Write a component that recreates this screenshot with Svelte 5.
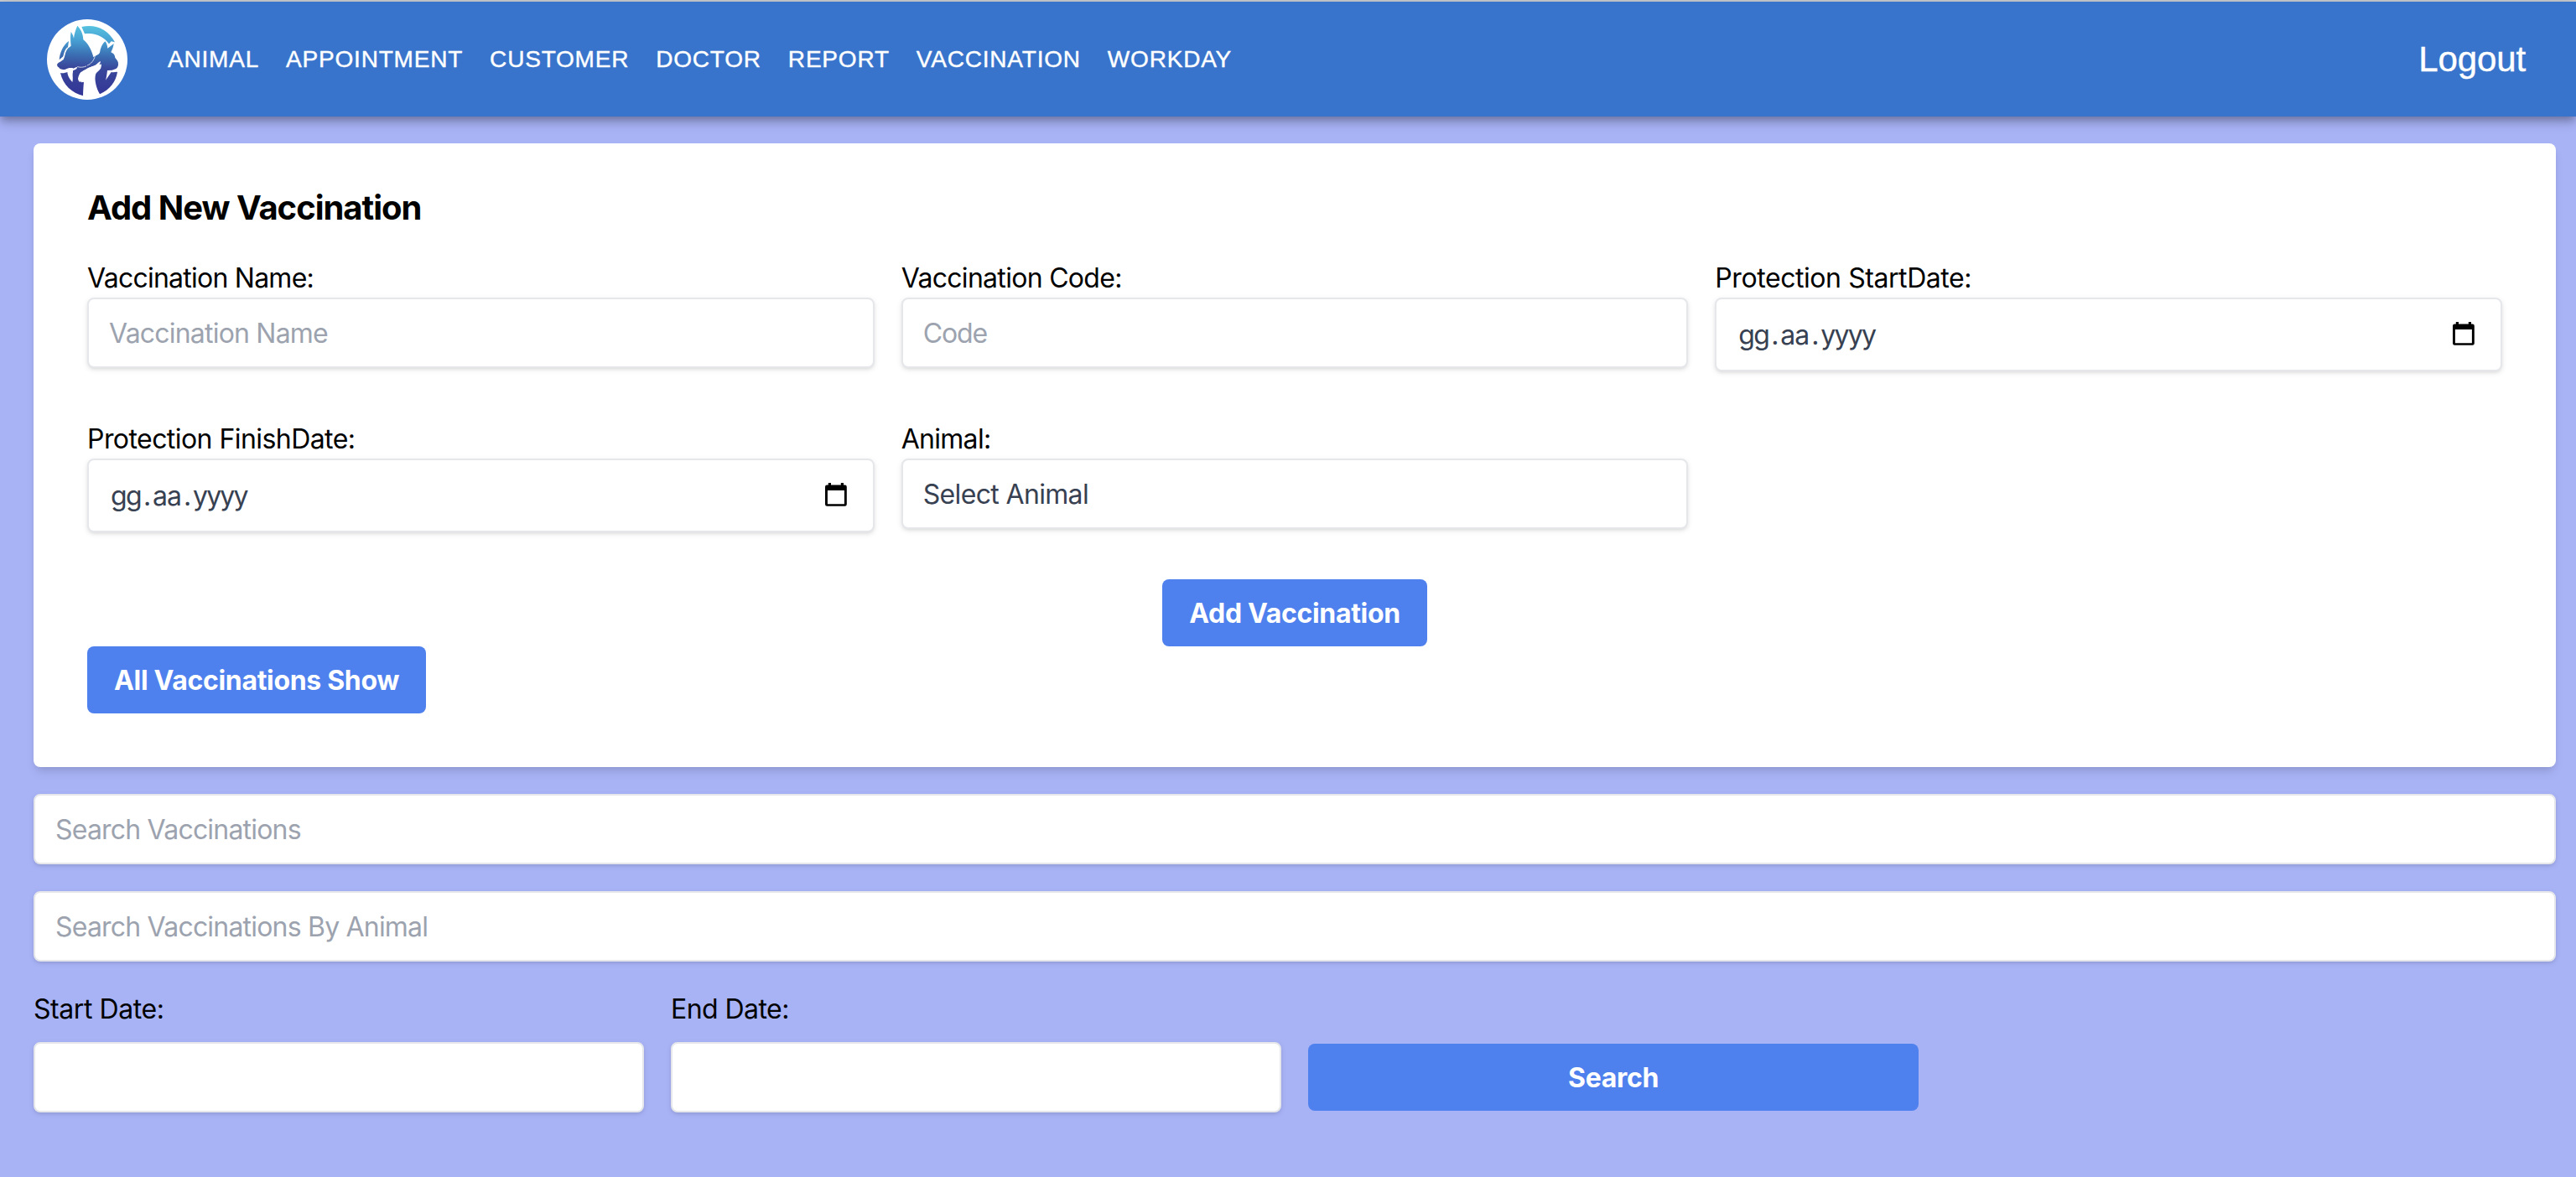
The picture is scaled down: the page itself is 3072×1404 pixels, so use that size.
<script>
  const links = ['ANIMAL', 'APPOINTMENT', 'CUSTOMER', 'DOCTOR', 'REPORT', 'VACCINATION', 'WORKDAY'];
  const placeholderDate = { day: 'gg', month: 'aa', year: 'yyyy' };
</script>

{#snippet dateField()}
  <div class="control date">
    <span class="date-text">
      <span class="day">{placeholderDate.day}</span><span class="dot">.</span><span class="month">{placeholderDate.month}</span><span class="dot">.</span><span class="year">{placeholderDate.year}</span>
    </span>
    <svg class="calendar" viewBox="0 0 26 28" aria-hidden="true">
      <rect x="3.8" y="0" width="3.2" height="5" />
      <rect x="18.8" y="0" width="3.2" height="5" />
      <path fill-rule="evenodd" d="M2.2 2.6H23.6A2.2 2.2 0 0 1 25.8 4.8V25.6A2.2 2.2 0 0 1 23.6 27.8H2.2A2.2 2.2 0 0 1 0 25.6V4.8A2.2 2.2 0 0 1 2.2 2.6ZM2.9 9V25.2H22.9V9Z" />
    </svg>
  </div>
{/snippet}

<div class="page">
  <header class="appbar">
    <svg class="logo" viewBox="18 24 288 288" role="img" aria-label="Veterinary logo">
      <defs>
        <linearGradient id="coat" gradientUnits="userSpaceOnUse" x1="170" y1="46" x2="160" y2="298">
          <stop offset="0" stop-color="#57c3e0" />
          <stop offset="0.22" stop-color="#479fd2" />
          <stop offset="0.42" stop-color="#3b6fb3" />
          <stop offset="0.6" stop-color="#39489b" />
          <stop offset="1" stop-color="#333596" />
        </linearGradient>
      </defs>
      <circle cx="162" cy="168" r="144" fill="#fff" />
      <g fill="url(#coat)">
        <path d="M142 51C190 39 238 60 261 106L248 103L240 112C222 86 190 70 153 76Z" />
        <path d="M62 169C64 144 75 117 96 102L93 124C82 130 80 143 76 157Z" />
        <path d="M127 47C137 58 147 72 148 97C164 110 178 132 184 160L178 181C172 191 160 194 146 194C136 200 124 203 112 199C102 197 93 198 84 203C74 205 64 203 60 196C52 190 53 183 60 179C66 176 69 174 77 168C83 158 82 146 88 136C92 127 98 124 104 119C102 101 101 85 104 69C109 75 112 84 114 92C116 75 121 59 127 47Z" />
        <path d="M226 103C231 108 234 117 235 128L257 111C256 121 252 132 247 142C257 146 261 152 262 162C268 169 274 176 273 183C274 190 270 199 265 201L251 206L234 207C232 224 230 237 228 242L248 213C258 215 266 211 270 213C265 246 244 276 207 292C194 270 189 246 190 220C197 214 206 207 211 199L212 186L200 186L180 192L184 160C196 156 203 150 207 143C209 127 216 112 226 103Z" />
        <path d="M66 216C76 219 84 215 91 213C92 228 101 240 109 249C113 234 107 221 112 211C124 213 135 207 144 204C136 216 130 227 129 237C132 246 140 248 150 246L148 298C108 288 76 260 66 216Z" />
        <path d="M112 196L146 188L182 160L206 148L213 172L201 180L180 192L152 206L130 218L111 214Z" />
      </g>
      <path d="M155 205C166 194 182 196 194 186C201 180 207 175 209 174C211 178 207 184 203 189L212 184C213 194 209 201 202 206C194 212 189 224 189 246C190 266 200 280 206 293C187 301 165 302 147 298L150 250C147 245 144 252 141 249C139 244 137 250 133 247C127 238 133 230 139 224C140 213 147 207 155 205Z" fill="#fff" />
      <path d="M90 203C103 202 114 205 128 194C136 197 150 196 158 192M163 189C176 184 187 170 190 155" fill="none" stroke="#fff" stroke-width="2.2" stroke-linecap="round" />
      <path d="M76 209C92 209 108 208 122 199" fill="none" stroke="#fff" stroke-width="6" stroke-linecap="round" />
    </svg>
    <nav>
      {#each links as link}
        <a href="#{link.toLowerCase()}">{link}</a>
      {/each}
    </nav>
    <a class="logout" href="#logout">Logout</a>
  </header>

  <main>
    <section class="card">
      <h2>Add New Vaccination</h2>
      <div class="fields">
        <div class="field">
          <span class="label name">Vaccination Name:</span>
          <div class="control hint name">Vaccination Name</div>
        </div>
        <div class="field">
          <span class="label">Vaccination Code:</span>
          <div class="control hint code">Code</div>
        </div>
        <div class="field">
          <span class="label start">Protection StartDate:</span>
          {@render dateField()}
        </div>
        <div class="field">
          <span class="label finish">Protection FinishDate:</span>
          {@render dateField()}
        </div>
        <div class="field">
          <span class="label">Animal:</span>
          <div class="control">Select Animal</div>
        </div>
      </div>
      <button class="add">Add Vaccination</button>
      <button>All Vaccinations Show</button>
    </section>

    <div class="control hint search">Search Vaccinations</div>
    <div class="control hint search">Search Vaccinations By Animal</div>

    <div class="filters">
      <div class="filter">
        <span class="label start">Start Date:</span>
        <div class="control"></div>
      </div>
      <div class="filter">
        <span class="label finish">End Date:</span>
        <div class="control"></div>
      </div>
      <button class="find">Search</button>
    </div>
  </main>
</div>

<style>
  :global(body) {
    background: #a8b3f6;
  }

  .page {
    box-sizing: border-box;
    min-height: 1404px;
    border-top: 2px solid #c9cdd2;
    background: #a8b3f6;
    color: #000;
    font: 32px/48px Inter, 'Liberation Sans', sans-serif;
  }

  .appbar {
    display: flex;
    align-items: center;
    gap: 48px;
    height: 137px;
    box-sizing: border-box;
    padding: 0 60px 0 56px;
    background: #3874cb;
    box-shadow:
      0 4px 8px -2px rgba(0, 0, 0, 0.2),
      0 8px 10px 0 rgba(0, 0, 0, 0.14),
      0 2px 20px 0 rgba(0, 0, 0, 0.12);
    font-family: 'Liberation Sans', Arial, sans-serif;
  }

  .appbar a {
    color: #fff;
    text-decoration: none;
    -webkit-text-stroke: 0.4px #fff;
  }

  .logo {
    width: 96px;
    height: 96px;
    flex: none;
  }

  nav {
    display: flex;
    gap: 32px;
    flex: 1;
    font-size: 28px;
    letter-spacing: 0.8px;
  }

  .logout {
    font-size: 42px;
    letter-spacing: -0.1px;
  }

  main {
    padding: 32px 24px 0 40px;
  }

  .card {
    padding: 48px 64px 64px;
    border-radius: 8px;
    background: #fff;
    box-shadow:
      0 8px 12px -2px rgba(0, 0, 0, 0.1),
      0 4px 8px -4px rgba(0, 0, 0, 0.1);
  }

  h2 {
    height: 56px;
    margin: 0 0 32px;
    font-size: 40px;
    line-height: 58px;
    font-weight: 700;
    letter-spacing: -1.02px;
  }

  .fields {
    display: grid;
    grid-template-columns: repeat(3, 1fr);
    gap: 56px 32px;
  }

  .label {
    display: block;
    height: 48px;
    line-height: 50px;
    letter-spacing: -0.7px;
  }

  .label.name {
    letter-spacing: -0.76px;
  }

  .label.start {
    letter-spacing: -0.43px;
  }

  .label.finish {
    letter-spacing: -0.56px;
  }

  .control {
    display: flex;
    align-items: center;
    box-sizing: border-box;
    height: 84px;
    padding: 2px 24px 0;
    border: 2px solid #e5e7eb;
    border-radius: 8px;
    background: #fff;
    color: #374151;
    letter-spacing: -0.65px;
    box-shadow:
      0 2px 6px 0 rgba(0, 0, 0, 0.1),
      0 2px 4px -2px rgba(0, 0, 0, 0.1);
  }

  .hint {
    color: #9ca3af;
  }

  .hint.name,
  .hint.search {
    letter-spacing: -0.8px;
  }

  .hint.code {
    letter-spacing: -1.1px;
  }

  .date {
    height: 88px;
    justify-content: space-between;
    padding: 2px 31px 0 26px;
  }

  .date-text {
    display: flex;
  }

  .day {
    width: 39px;
    letter-spacing: -1.6px;
  }

  .dot {
    width: 11px;
  }

  .month {
    width: 37px;
    letter-spacing: -1px;
  }

  .year {
    letter-spacing: -1.8px;
  }

  .calendar {
    width: 26px;
    height: 28px;
    margin-bottom: 4px;
  }

  button {
    display: block;
    height: 80px;
    padding: 2px 32px 0;
    border: 0;
    border-radius: 8px;
    background: #4f81ee;
    color: #fff;
    font: 700 32px/48px Inter, 'Liberation Sans', sans-serif;
    letter-spacing: -0.32px;
  }

  .add {
    margin: 56px auto 0;
  }

  .search {
    margin-top: 32px;
  }

  .filters {
    display: grid;
    grid-template-columns: repeat(4, 1fr);
    gap: 32px;
    align-items: end;
    margin-top: 32px;
  }

  .filter .control {
    margin-top: 16px;
  }

  .find {
    margin-bottom: 2px;
  }
</style>
